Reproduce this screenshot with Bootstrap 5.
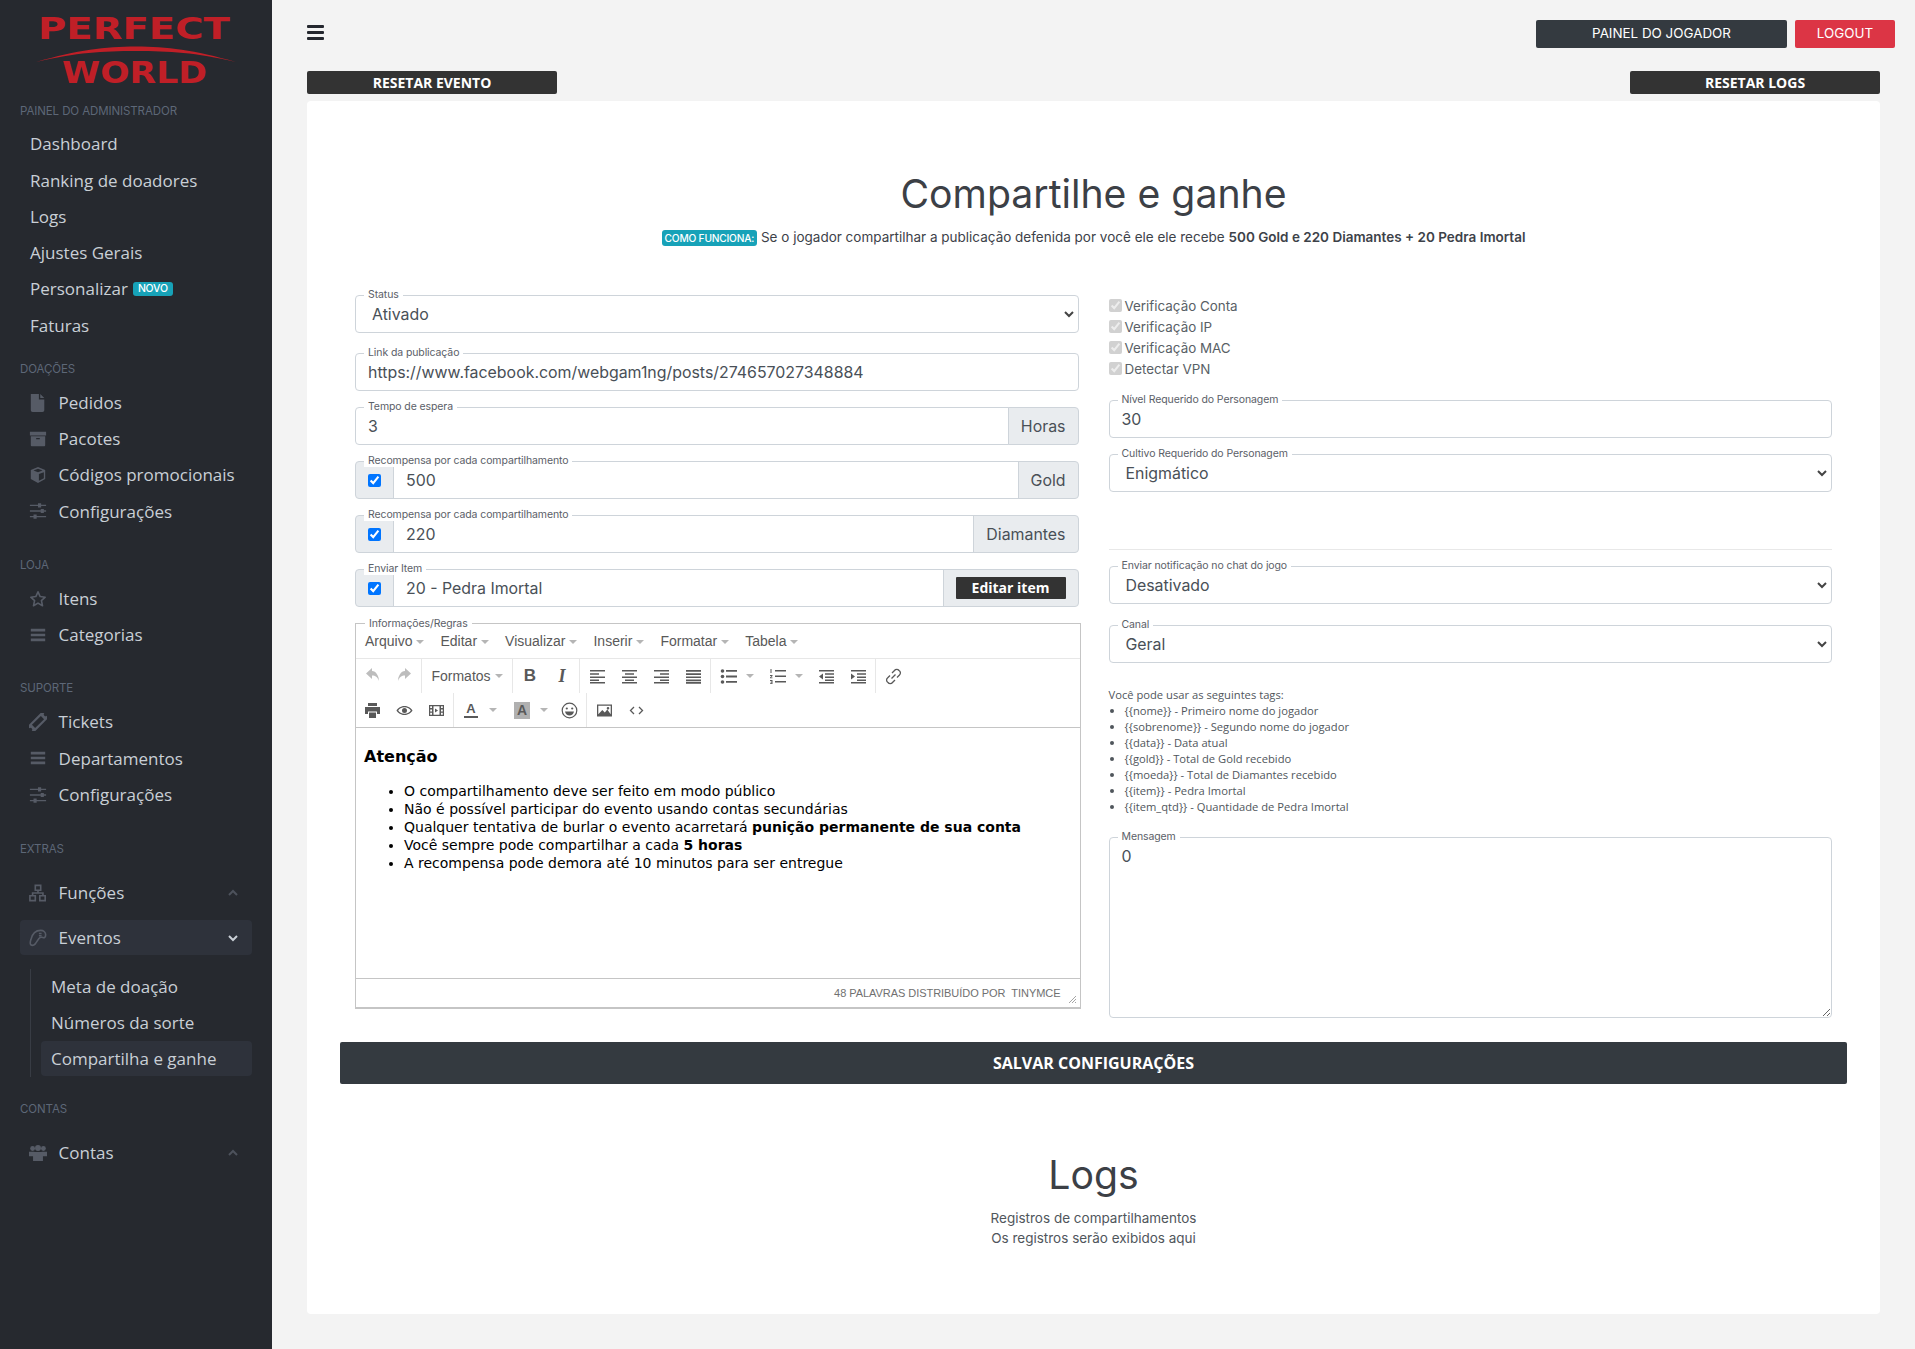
<!doctype html>
<html lang="pt-BR">
<head>
<meta charset="utf-8">
<title>Compartilhe e ganhe</title>
<link href="https://cdn.jsdelivr.net/npm/bootstrap@5.3.0/dist/css/bootstrap.min.css" rel="stylesheet">
<style>
html,body{height:1349px;overflow:hidden}
body{background:#f3f3f3;font-family:"Inter","Liberation Sans",sans-serif;color:#3d4249;font-size:14px}
.side{width:272px;flex:0 0 272px;background:#26292f;height:1349px;font-family:"Open Sans",sans-serif;padding-top:5px}
.side svg.ic{width:18px;height:18px;fill:#565b66;flex:none;margin:0 11.6px 0 -1px}
.side svg.st{fill:none;stroke:#565b66;stroke-width:1.8}
.logo{display:block}
.side-h{font:11.5px/16px "Inter",sans-serif;letter-spacing:-.1px;color:#5d6777;padding-left:20px;margin-bottom:8px}
.side-i{display:flex;align-items:center;height:36.25px;color:#c9cfd6;font-size:17px;padding-left:30px;margin-right:20px;border-radius:4px}
.side-i .chev{margin-left:auto;margin-right:13px;width:12px;height:12px;fill:none;stroke:#4d525c;stroke-width:2}
.on-row{background:#2e323b;margin-left:20px;padding-left:10px;height:35px}
.on-row .chev{stroke:#c9cfd6}
.sub-wrap{margin:14px 0 0 30px;border-left:1px solid #383c44;height:108px}
.sub-i{display:flex;align-items:center;height:36px;color:#c9cfd6;font-size:17px;padding-left:10px;margin-left:10px;margin-right:20px;border-radius:4px}
.sub-on{background:#2e323b;height:35px;margin-top:0}
.nv{background:#17a2b8;color:#fff;font:500 10.5px/1 "Inter",sans-serif;padding:2px 5px;border-radius:3px;margin-left:5px;letter-spacing:-.2px}
.gap1{margin-top:17px}.gap2{margin-top:27px}.gap3{margin-top:28px}.gap4{margin-top:24px}
.main-a{flex:1;padding:0 20px 0 35px;min-width:0}
.top-r{height:71px}
.burger{width:17px;height:15px;margin-top:25px;display:flex;flex-direction:column;justify-content:space-between}
.burger i{display:block;height:3px;background:#24272e;border-radius:1px}
.top-b{height:28px;border-radius:2px;color:#fff;font-size:13.4px;line-height:27px;text-align:center;margin-top:20px}
.b-dark{width:251px;background:#343a40;margin-right:8px}
.b-red{width:100px;background:#dc3545}
.rs-row{height:30px;margin-right:15px}
.rs{width:250px;height:23px;background:#333;color:#fff;font:700 14px/23px "Open Sans",sans-serif;text-align:center;border-radius:2px}
.pane{background:#fff;border-radius:4px;height:1213px;margin-right:15px;padding:69px 33px 0}
.ttl{font:400 39.2px/48px "Inter",sans-serif;color:#3c4046;margin:0;text-align:center}
.how{height:20px;margin-top:9px;text-align:center;font-size:13.5px;line-height:20px;color:#3d4249}
.how .tg{background:#17a2b8;color:#fff;font-size:10.2px;font-weight:500;padding:2px 3px;border-radius:3px;letter-spacing:-.2px}
.how b{font-weight:600}
.cols{display:grid;grid-template-columns:minmax(0,1fr) minmax(0,1fr);column-gap:30px;padding:48px 15px 0}
.fs{position:relative;margin-bottom:16px}
.fs>label,.lg{position:absolute;left:9px;top:-6px;z-index:6;background:#fff;padding:0 4px;font-size:10.5px;line-height:12px;color:#5b6068;letter-spacing:-.1px}
.fc{height:38px;border-color:#ced4da;color:#495057;font-size:15.9px;padding:6.5px 12px 5.5px;border-radius:4px;box-shadow:none!important}
.form-select.fc{padding-left:16px;background-image:url("data:image/svg+xml,%3csvg xmlns='http://www.w3.org/2000/svg' viewBox='0 0 12 10'%3e%3cpath fill='none' stroke='%23444' stroke-width='2' d='M2 3l4 4 4-4'/%3e%3c/svg%3e");background-size:12px 10px;background-position:right 3px center}
.adn{background:#e9ecef;border-color:#ced4da;color:#495057;font-size:15.9px;padding:6.500px 12px 5.500px;border-radius:4px}
.chk{width:39px;justify-content:center;padding:0}
.chk input{width:13px;height:13px;accent-color:#0075ff;margin:0}
.edit-b{width:110px;height:22px;background:#333;color:#fff;font:700 14px/22px "Open Sans",sans-serif;text-align:center;border-radius:1px}
.adn-b{padding:0 12px}
.mce{position:relative;height:386px;border:1px solid #c5c5c5;border-bottom-width:2px;margin:1px -2px 0 0;font-family:"Liberation Sans",sans-serif;display:flex;flex-direction:column}
.mce-menu{height:35px;display:flex;align-items:center;padding:1px 0 0 9px;font-size:14px;color:#595959;border-bottom:1px solid #e7e7e7}
.mce-menu .mi{display:flex;align-items:center;margin-right:16px}
.crt{display:inline-block;width:0;height:0;border:4px solid transparent;border-top-color:#b5b5b5;border-bottom:0;margin-left:4px}
.mce-bar{height:34px;display:flex;align-items:center;color:#595959}
.tb{width:32px;height:28px;display:flex;align-items:center;justify-content:center;flex:none}
.tb svg{width:17px;height:17px;fill:#595959}
.tb.dis svg{fill:#bdbdbd}
.tc{width:17px;justify-content:flex-start;padding-left:2px}
.tc .crt{margin-left:0}
.tbg{margin-left:2px}
.tc-s{width:15px}
.ta-u{font:700 13px/14px "Liberation Sans",sans-serif;border-bottom:2px solid #595959;padding:0 2px}
.ta-b{font:700 14px/17px "Liberation Sans",sans-serif;background:#b0b0b0;padding:0 3px;width:16px;text-align:center}
.t-bold{font:700 17px "Liberation Sans",sans-serif}
.t-ital{font:italic 700 18px "Liberation Serif",serif}
.t-fmt{width:88px;font-size:14px}
.sep{width:1px;height:34px;background:#e7e7e7;flex:none;margin:0 1px}
.mce-body{flex:1;border-top:1px solid #c5c5c5;padding:17px 0 0 8px;font-family:"DejaVu Sans",sans-serif;font-size:14px;line-height:18px;color:#000}
.mce-body h6{font:700 16px/24px "DejaVu Sans",sans-serif;margin:0 0 13px}
.mce-body ul{margin:0;padding-left:40px}
.mce-foot{height:29px;border-top:1px solid #c5c5c5;display:flex;align-items:center;justify-content:flex-end;padding-right:19px;font-size:11px;color:#707070;position:relative;letter-spacing:-.05px}
.grip{position:absolute;right:3px;bottom:3px;width:9px;height:9px;fill:none;stroke:#a5a5a5}
.ck{display:flex;align-items:center;height:21px;font-size:13.4px;color:#595f66;gap:3px}
.ck input{width:13px;height:13px;margin:0 0 3px}
.cks{height:105px;padding-top:1px}
.hr-l{height:1px;background:#e8e8e8;margin:57px 0 16px}
.tags{font:11.2px/16px "Open Sans",sans-serif;color:#50565c;margin-top:24px;height:134px}
.tags ul{margin:0;padding-left:16px}
.ta{height:181px;resize:vertical}
.save{height:42px;background:#343a40;color:#fff;font:700 16px/42px "Open Sans",sans-serif;text-align:center;border-radius:2px;margin-top:24px}
.lg-t{font:400 39.2px/48px "Inter",sans-serif;color:#3c4046;text-align:center;margin:67px 0 0}
.lg-p{text-align:center;font-size:13.5px;line-height:20px;color:#50565c;margin-top:9px}
</style>
</head>
<body class="d-flex">
<svg width="0" height="0" class="position-absolute">
<defs>
<symbol id="i-file" viewBox="0 0 20 20"><path d="M2 0h9v6h6v12a2 2 0 0 1-2 2H4a2 2 0 0 1-2-2zM12.500 0 17 4.500H12.500z"/></symbol>
<symbol id="i-arch" viewBox="0 0 20 20"><path d="M1 2h18v4H1zM2 7h16v10a1 1 0 0 1-1 1H3a1 1 0 0 1-1-1zm6 2v1.300h4V9z"/></symbol>
<symbol id="i-cube" viewBox="0 0 20 20"><path d="M10 1 18 4.500v10L10 19l-8-4.500v-10zM10 3 5 5l5 2 5-2zM11 9v7.500l5.500-3V7z"/></symbol>
<symbol id="i-sl" viewBox="0 0 20 20"><path d="M1 3h18v1.500H1zM1 9.200h18v1.500H1zM1 15.500h18V17H1z"/><path d="M10 1.500h3.500v4.500H10zM13 7.700h3.500v4.500H13zM5 14h3.500v4.500H5z"/></symbol>
<symbol id="i-star" viewBox="0 0 20 20"><path d="M10 2 12.400 7.300 18 8 13.800 11.800 15 17.500 10 14.600 5 17.500 6.200 11.800 2 8 7.600 7.300z" fill="none" stroke-linejoin="round"/></symbol>
<symbol id="i-bars" viewBox="0 0 20 20"><path d="M2 3h16v3H2zM2 8.500h16v3H2zM2 14h16v3H2z"/></symbol>
<symbol id="i-tick" viewBox="0 0 20 20"><path transform="rotate(-45 10 10)" fill-rule="evenodd" d="M-2 5h24v3a2 2 0 0 0 0 4v3H-2v-3a2 2 0 0 0 0-4zM3 7.500v5h14v-5z"/></symbol>
<symbol id="i-map" viewBox="0 0 20 20"><path d="M7 1.500h6v5.500H7zM1 13h6v5.500H1zM12 13h6v5.500h-6zM10 7v3M4 13v-3h11.500v3" fill="none"/></symbol>
<symbol id="i-pad" viewBox="0 0 20 20"><path d="M13 1.500c3 0 5.500 2 5.500 5 0 3-1.500 3.500-3 3-1.500-.5-3-.5-4.500 1L7 16.500c-1.500 1.500-3.500 2-5 1-.8-1-.8-3 .2-6C3.500 6 7 1.500 13 1.500z" fill="none"/><path d="M11 5h3M11 7.500h3" fill="none"/></symbol>
<symbol id="i-usr" viewBox="0 0 20 20"><circle cx="4" cy="5" r="2.700"/><circle cx="16" cy="5" r="2.700"/><circle cx="10" cy="4.500" r="3.300"/><path d="M0 8.500h6v5H0zM14 8.500h6v5h-6zM4.500 9h11v10h-11z"/></symbol>
<symbol id="t-undo" viewBox="0 0 17 17"><path d="M8 3V0L2 5.500 8 11V7.500c3.500 0 5.500 1.500 7 5.500 0-5-3-10-7-10z"/></symbol>
<symbol id="t-redo" viewBox="0 0 17 17"><path d="M9 3V0l6 5.500L9 11V7.500c-3.500 0-5.500 1.500-7 5.500 0-5 3-10 7-10z"/></symbol>
<symbol id="t-al" viewBox="0 0 17 17"><path d="M1 2h15v1.500H1zM1 5.200h9v1.500H1zM1 8.400h15v1.500H1zM1 11.600h9v1.500H1zM1 14h15v1.500H1z"/></symbol>
<symbol id="t-ac" viewBox="0 0 17 17"><path d="M1 2h15v1.500H1zM4 5.200h9v1.500H4zM1 8.400h15v1.500H1zM4 11.600h9v1.500H4zM1 14h15v1.500H1z"/></symbol>
<symbol id="t-ar" viewBox="0 0 17 17"><path d="M1 2h15v1.500H1zM7 5.200h9v1.500H7zM1 8.400h15v1.500H1zM7 11.600h9v1.500H7zM1 14h15v1.500H1z"/></symbol>
<symbol id="t-aj" viewBox="0 0 17 17"><path d="M1 2h15v1.700H1zM1 5.200h15v1.700H1zM1 8.400h15v1.700H1zM1 11.600h15v1.700H1zM1 14h15v1.700H1z"/></symbol>
<symbol id="t-ul" viewBox="0 0 17 17"><circle cx="2.500" cy="3" r="1.800"/><circle cx="2.500" cy="8.500" r="1.800"/><circle cx="2.500" cy="14" r="1.800"/><path d="M6 2h11v1.800H6zM6 7.600h11v1.800H6zM6 13h11v1.800H6z"/></symbol>
<symbol id="t-ol" viewBox="0 0 17 17"><path d="M1.500 1h1v4h-1zM1 7h2.500v1L2 9.500h1.500v.8H1v-.8l1.500-1.500H1zM1 12h2.500v4H1v-.8h1.500v-.8H1.500v-.7h1v-.8H1z"/><path d="M6 2h11v1.500H6zM6 7.600h11v1.500H6zM6 13h11v1.500H6z"/></symbol>
<symbol id="t-out" viewBox="0 0 17 17"><path d="M1 2h15v1.500H1zM7 5.200h9v1.500H7zM7 8.400h9v1.500H7zM7 11.600h9v1.500H7zM1 14h15v1.500H1zM5 5.500v6L1 8.500z"/></symbol>
<symbol id="t-in" viewBox="0 0 17 17"><path d="M1 2h15v1.500H1zM7 5.200h9v1.500H7zM7 8.400h9v1.500H7zM7 11.600h9v1.500H7zM1 14h15v1.500H1zM1 5.500v6l4-3z"/></symbol>
<symbol id="t-lnk" viewBox="0 0 17 17"><path d="M6.500 10.500 10.500 6.500M7 5l2.500-2.500a2.800 2.800 0 0 1 4.500 0 2.800 2.800 0 0 1 .5 4.500L12 9.500M10 12l-2.500 2.500a2.800 2.800 0 0 1-4.500 0A2.800 2.800 0 0 1 2.500 10L5 7.500" fill="none" stroke="#595959" stroke-width="1.300"/></symbol>
<symbol id="t-pr" viewBox="0 0 17 17"><path d="M4 1h9v3H4zM1 5h15v7h-3V9.500H4V12H1zM5 10.500h7V16H5z"/></symbol>
<symbol id="t-eye" viewBox="0 0 17 17"><path d="M8.500 4C4.500 4 1.500 6.500.5 8.500c1 2 4 4.500 8 4.500s7-2.500 8-4.500c-1-2-4-4.500-8-4.500zm0 1.300c3 0 5.300 1.700 6.300 3.200-1 1.500-3.300 3.200-6.300 3.200S3.200 10 2.200 8.500c1-1.500 3.300-3.200 6.300-3.200zM8.500 6a2.500 2.500 0 1 0 0 5 2.500 2.500 0 0 0 0-5z"/></symbol>
<symbol id="t-med" viewBox="0 0 17 17"><path d="M1 3h15v11H1zm1.200 1.200v1.800h1.800V4.200zm0 3.200v2h1.800v-2zm0 3.300v2.100h1.800v-2.100zM13 4.200v1.800h1.800V4.200zm0 3.200v2h1.800v-2zm0 3.300v2.100h1.800v-2.100zM5.500 4.200v8.600h6V4.200zM7 6.500l3 2-3 2z" fill-rule="evenodd"/></symbol>
<symbol id="t-smi" viewBox="0 0 17 17"><circle cx="8.500" cy="8.500" r="7.300" fill="none" stroke="#595959" stroke-width="1.200"/><circle cx="5.800" cy="6.500" r="1.100"/><circle cx="11.200" cy="6.500" r="1.100"/><path d="M4 9.500h9c-.5 2.500-2.300 4-4.500 4S4.500 12 4 9.500z"/></symbol>
<symbol id="t-img" viewBox="0 0 17 17"><path d="M1 2.500h15v12H1zm1.300 1.300v8.500l4-4.300 2.500 2.500 2.500-3 3.400 4.800V3.800zM12 5a1.300 1.300 0 1 0 0 2.600A1.300 1.300 0 0 0 12 5z" fill-rule="evenodd"/></symbol>
<symbol id="t-code" viewBox="0 0 17 17"><path d="M6 5 2.500 8.500 6 12M11 5l3.500 3.500L11 12" fill="none" stroke="#595959" stroke-width="1.300"/></symbol>
<symbol id="c-up" viewBox="0 0 12 12"><path d="M2 8l4-4 4 4"/></symbol>
<symbol id="c-dn" viewBox="0 0 12 12"><path d="M2 4l4 4 4-4"/></symbol>
</defs>
</svg>

<aside class="side">
  <svg class="logo" width="272" height="91" viewBox="0 5 272 91" aria-label="Perfect World">
    <text x="38" y="38.500" font-family="DejaVu Sans" font-weight="700" font-size="31" fill="#c01f27" textLength="192" lengthAdjust="spacingAndGlyphs">PERFECT</text>
    <path d="M36 62C78 50 105 46.500 136 46.500s58 3.500 100 15.500C195 52.500 170 51 136 51S77 52.500 36 62z" fill="#c01f27"/>
    <text x="62" y="83" font-family="DejaVu Sans" font-weight="700" font-size="31" fill="#c01f27" textLength="145" lengthAdjust="spacingAndGlyphs">WORLD</text>
  </svg>
  <div class="side-h" style="margin-top:7px;margin-bottom:7px">PAINEL DO ADMINISTRADOR</div>
  <div class="side-i">Dashboard</div>
  <div class="side-i">Ranking de doadores</div>
  <div class="side-i">Logs</div>
  <div class="side-i">Ajustes Gerais</div>
  <div class="side-i">Personalizar <span class="nv">NOVO</span></div>
  <div class="side-i">Faturas</div>

  <div class="side-h gap1">DOAÇÕES</div>
  <div class="side-i"><svg class="ic"><use href="#i-file"/></svg>Pedidos</div>
  <div class="side-i"><svg class="ic"><use href="#i-arch"/></svg>Pacotes</div>
  <div class="side-i"><svg class="ic"><use href="#i-cube"/></svg>Códigos promocionais</div>
  <div class="side-i"><svg class="ic"><use href="#i-sl"/></svg>Configurações</div>

  <div class="side-h gap2">LOJA</div>
  <div class="side-i"><svg class="ic st"><use href="#i-star"/></svg>Itens</div>
  <div class="side-i"><svg class="ic"><use href="#i-bars"/></svg>Categorias</div>

  <div class="side-h gap2">SUPORTE</div>
  <div class="side-i"><svg class="ic"><use href="#i-tick"/></svg>Tickets</div>
  <div class="side-i"><svg class="ic"><use href="#i-bars"/></svg>Departamentos</div>
  <div class="side-i"><svg class="ic"><use href="#i-sl"/></svg>Configurações</div>

  <div class="side-h gap3" style="margin-bottom:18px">EXTRAS</div>
  <div class="side-i" style="margin-bottom:9px"><svg class="ic st"><use href="#i-map"/></svg>Funções<svg class="chev"><use href="#c-up"/></svg></div>
  <div class="side-i on-row"><svg class="ic st"><use href="#i-pad"/></svg>Eventos<svg class="chev"><use href="#c-dn"/></svg></div>
  <div class="sub-wrap">
    <div class="sub-i">Meta de doação</div>
    <div class="sub-i">Números da sorte</div>
    <div class="sub-i sub-on">Compartilha e ganhe</div>
  </div>
  <div class="side-h gap4" style="margin-bottom:18px">CONTAS</div>
  <div class="side-i"><svg class="ic"><use href="#i-usr"/></svg>Contas<svg class="chev"><use href="#c-up"/></svg></div>
</aside>

<main class="main-a">
  <div class="d-flex justify-content-between top-r">
    <div class="burger"><i></i><i></i><i></i></div>
    <div class="d-flex">
      <div class="top-b b-dark">PAINEL DO JOGADOR</div>
      <div class="top-b b-red">LOGOUT</div>
    </div>
  </div>
  <div class="d-flex justify-content-between rs-row">
    <div class="rs">RESETAR EVENTO</div>
    <div class="rs">RESETAR LOGS</div>
  </div>
  <div class="pane">
    <h1 class="ttl">Compartilhe e ganhe</h1>
    <div class="how"><span class="tg">COMO FUNCIONA:</span> Se o jogador compartilhar a publicação defenida por você ele ele recebe <b>500 Gold e 220 Diamantes + 20 Pedra Imortal</b></div>
    <div class="cols">
      <div>
        <div class="fs" style="margin-bottom:20px"><label>Status</label>
          <select class="form-select fc"><option>Ativado</option></select></div>
        <div class="fs"><label>Link da publicação</label>
          <input class="form-control fc" value="https://www.facebook.com/webgam1ng/posts/274657027348884"></div>
        <div class="fs"><label>Tempo de espera</label>
          <div class="input-group"><input class="form-control fc" value="3"><span class="input-group-text adn">Horas</span></div></div>
        <div class="fs"><label>Recompensa por cada compartilhamento</label>
          <div class="input-group"><span class="input-group-text adn chk"><input type="checkbox" checked></span><input class="form-control fc" value="500"><span class="input-group-text adn">Gold</span></div></div>
        <div class="fs"><label>Recompensa por cada compartilhamento</label>
          <div class="input-group"><span class="input-group-text adn chk"><input type="checkbox" checked></span><input class="form-control fc" value="220"><span class="input-group-text adn">Diamantes</span></div></div>
        <div class="fs"><label>Enviar Item</label>
          <div class="input-group"><span class="input-group-text adn chk"><input type="checkbox" checked></span><input class="form-control fc" value="20 - Pedra Imortal"><span class="input-group-text adn adn-b"><span class="edit-b">Editar item</span></span></div></div>
        <div class="mce">
          <span class="lg" style="font-family:'Inter',sans-serif">Informações/Regras</span>
          <div class="mce-menu">
            <span class="mi">Arquivo<i class="crt"></i></span><span class="mi">Editar<i class="crt"></i></span><span class="mi">Visualizar<i class="crt"></i></span><span class="mi">Inserir<i class="crt"></i></span><span class="mi">Formatar<i class="crt"></i></span><span class="mi">Tabela<i class="crt"></i></span>
          </div>
          <div class="mce-bar">
            <div class="tb dis"><svg><use href="#t-undo"/></svg></div><div class="tb dis"><svg><use href="#t-redo"/></svg></div><div class="sep"></div>
            <div class="tb t-fmt">Formatos<i class="crt"></i></div><div class="sep"></div>
            <div class="tb t-bold">B</div><div class="tb t-ital">I</div><div class="sep"></div>
            <div class="tb"><svg><use href="#t-al"/></svg></div><div class="tb"><svg><use href="#t-ac"/></svg></div><div class="tb"><svg><use href="#t-ar"/></svg></div><div class="tb"><svg><use href="#t-aj"/></svg></div><div class="sep"></div>
            <div class="tb"><svg><use href="#t-ul"/></svg></div><div class="tb tc"><i class="crt"></i></div>
            <div class="tb"><svg><use href="#t-ol"/></svg></div><div class="tb tc"><i class="crt"></i></div>
            <div class="tb"><svg><use href="#t-out"/></svg></div><div class="tb"><svg><use href="#t-in"/></svg></div><div class="sep"></div>
            <div class="tb"><svg><use href="#t-lnk"/></svg></div>
          </div>
          <div class="mce-bar">
            <div class="tb"><svg><use href="#t-pr"/></svg></div><div class="tb"><svg><use href="#t-eye"/></svg></div><div class="tb"><svg><use href="#t-med"/></svg></div><div class="sep"></div>
            <div class="tb"><span class="ta-u">A</span></div><div class="tb tc"><i class="crt"></i></div>
            <div class="tb tbg"><span class="ta-b">A</span></div><div class="tb tc tc-s"><i class="crt"></i></div>
            <div class="tb"><svg><use href="#t-smi"/></svg></div><div class="sep"></div>
            <div class="tb"><svg><use href="#t-img"/></svg></div><div class="tb"><svg><use href="#t-code"/></svg></div>
          </div>
          <div class="mce-body">
            <h6>Atenção</h6>
            <ul>
              <li>O compartilhamento deve ser feito em modo público</li>
              <li>Não é possível participar do evento usando contas secundárias</li>
              <li>Qualquer tentativa de burlar o evento acarretará <b>punição permanente de sua conta</b></li>
              <li>Você sempre pode compartilhar a cada <b>5 horas</b></li>
              <li>A recompensa pode demora até 10 minutos para ser entregue</li>
            </ul>
          </div>
          <div class="mce-foot">48 PALAVRAS DISTRIBUÍDO POR &nbsp;TINYMCE
            <svg class="grip" viewBox="0 0 9 9"><path d="M8 1 1 8M8 4 4 8M8 7 7 8"/></svg>
          </div>
        </div>
      </div>
      <div>
        <div class="cks">
          <label class="ck"><input type="checkbox" checked disabled>Verificação Conta</label>
          <label class="ck"><input type="checkbox" checked disabled>Verificação IP</label>
          <label class="ck"><input type="checkbox" checked disabled>Verificação MAC</label>
          <label class="ck"><input type="checkbox" checked disabled>Detectar VPN</label>
        </div>
        <div class="fs"><label>Nível Requerido do Personagem</label><input class="form-control fc" value="30"></div>
        <div class="fs" style="margin:0"><label>Cultivo Requerido do Personagem</label><select class="form-select fc"><option>Enigmático</option></select></div>
        <div class="hr-l"></div>
        <div class="fs" style="margin-bottom:21px"><label>Enviar notificação no chat do jogo</label><select class="form-select fc"><option>Desativado</option></select></div>
        <div class="fs" style="margin:0"><label>Canal</label><select class="form-select fc"><option>Geral</option></select></div>
        <div class="tags">Você pode usar as seguintes tags:
          <ul>
            <li>{{nome}} - Primeiro nome do jogador</li>
            <li>{{sobrenome}} - Segundo nome do jogador</li>
            <li>{{data}} - Data atual</li>
            <li>{{gold}} - Total de Gold recebido</li>
            <li>{{moeda}} - Total de Diamantes recebido</li>
            <li>{{item}} - Pedra Imortal</li>
            <li>{{item_qtd}} - Quantidade de Pedra Imortal</li>
          </ul>
        </div>
        <div class="fs" style="margin:16px 0 0"><label>Mensagem</label><textarea class="form-control fc ta">0</textarea></div>
      </div>
    </div>
    <div class="save">SALVAR CONFIGURAÇÕES</div>
    <div class="lg-t">Logs</div>
    <div class="lg-p">Registros de compartilhamentos<br>Os registros serão exibidos aqui</div>
  </div>
</main>
</body>
</html>
